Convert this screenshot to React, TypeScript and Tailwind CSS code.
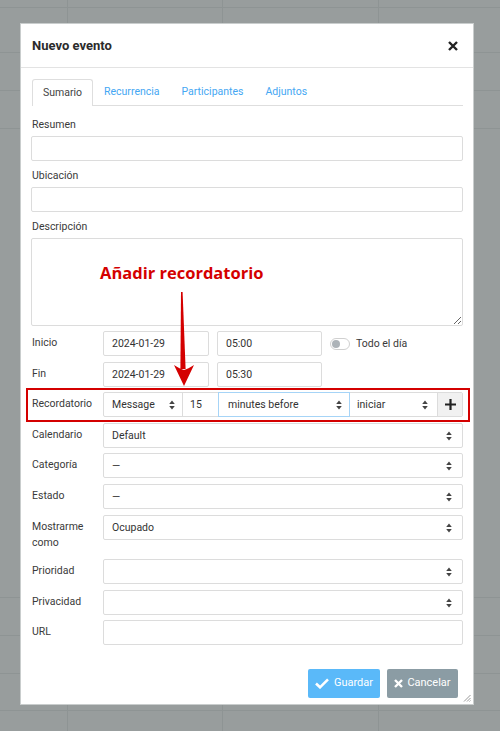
import React from 'react';

const font = { fontFamily: 'Roboto, "Liberation Sans", sans-serif' };

function Arrows() {
  return (
    <svg width="6" height="10" viewBox="0 0 6 10" className="shrink-0">
      <path d="M3 0.5 L5.8 4 H0.2Z M3 9.5 L0.2 6 H5.8Z" fill="#444" />
    </svg>
  );
}

function Field({ value = '', className = '' }: { value?: string; className?: string }) {
  return (
    <div className={`h-[25px] border border-[#dcdcdc] rounded-[2px] bg-white px-[8px] flex items-center text-[10.5px] text-[#333] ${className}`}>
      {value}
    </div>
  );
}

function Select({ value = '', className = '' }: { value?: string; className?: string }) {
  return (
    <div className={`h-[25px] border border-[#dcdcdc] rounded-[2px] bg-white pl-[8px] pr-[10px] flex items-center justify-between text-[10.5px] text-[#333] ${className}`}>
      <span>{value}</span>
      <Arrows />
    </div>
  );
}

function Row({ label, children, className = '' }: { label: string; children: React.ReactNode; className?: string }) {
  return (
    <div className={`flex ${className}`}>
      <div className="w-[72px] shrink-0 pt-[4px] leading-[16px] text-[10.5px] text-[#3a3a3a] pl-[1px]">{label}</div>
      <div className="flex-1 flex gap-[8px] items-start">{children}</div>
    </div>
  );
}

export default function App() {
  const hLines = [7, 52, 90, 128, 597, 635, 673, 710];
  const vLines = [67, 222, 378];
  return (
    <div className="relative w-[500px] h-[731px] bg-[#989d9d] overflow-hidden pt-[23px] pl-[20px]" style={font}>
      <svg className="absolute inset-0" width="500" height="731">
        {hLines.map(y => (
          <line key={y} x1="0" x2="500" y1={y + 0.5} y2={y + 0.5} stroke="#8e9494" strokeWidth="1" />
        ))}
        {vLines.map(x => (
          <line key={x} x1={x + 0.5} x2={x + 0.5} y1="0" y2="731" stroke="#8e9494" strokeWidth="1" />
        ))}
      </svg>

      <div className="relative w-[454px] h-[682px] bg-white border border-[#c9cdcd]">
        {/* header */}
        <div className="h-[44px] border-b border-[#e3e3e3] px-[11px] flex items-center justify-between">
          <span className="text-[13px] font-bold text-[#2b2b2b]">Nuevo evento</span>
          <svg width="10" height="10" viewBox="0 0 10 10" className="mr-[4px]">
            <path d="M1 1 L9 9 M9 1 L1 9" stroke="#222" strokeWidth="2.4" />
          </svg>
        </div>

        <div className="px-[10px]">
          {/* tabs */}
          <div className="mt-[11px] h-[27px] flex border-b border-[#dedede] ml-[1px] text-[10.5px]">
            <div className="px-[10px] h-[27px] flex items-center border border-b-0 border-[#dedede] rounded-t-[3px] bg-white text-[#444]">Sumario</div>
            <div className="px-[11px] flex items-center text-[#45a7f3]">Recurrencia</div>
            <div className="px-[11px] flex items-center text-[#45a7f3]">Participantes</div>
            <div className="px-[11px] flex items-center text-[#45a7f3]">Adjuntos</div>
          </div>

          <div className="mt-[11px] leading-[15px] text-[10.5px] text-[#3a3a3a] pl-[1px]">Resumen</div>
          <Field className="mt-[4px]" />
          <div className="mt-[7px] leading-[15px] text-[10.5px] text-[#3a3a3a] pl-[1px]">Ubicación</div>
          <Field className="mt-[4px]" />
          <div className="mt-[7px] leading-[15px] text-[10.5px] text-[#3a3a3a] pl-[1px]">Descripción</div>
          <textarea className="mt-[4px] block w-full h-[88px] border border-[#dcdcdc] rounded-[2px] outline-none" />

          <Row label="Inicio" className="mt-[5px]">
            <Field value="2024-01-29" className="w-[106px]" />
            <Field value="05:00" className="w-[105px]" />
            <div className="flex items-center h-[25px] gap-[6px]">
              <div className="w-[20px] h-[12px] rounded-full border border-[#d0d0d0] bg-white flex items-center px-[1px]">
                <div className="w-[8px] h-[8px] rounded-full bg-[#adb3b8]" />
              </div>
              <span className="text-[10.5px] text-[#3a3a3a]">Todo el día</span>
            </div>
          </Row>
          <Row label="Fin" className="mt-[6px]">
            <Field value="2024-01-29" className="w-[106px]" />
            <Field value="05:30" className="w-[105px]" />
          </Row>

          <div className="relative mt-[5px]">
            <Row label="Recordatorio">
              <div className="flex-1 flex h-[25px] border border-[#dcdcdc] rounded-[2px] text-[10.5px] text-[#333]">
                <div className="w-[79px] flex items-center justify-between pl-[8px] pr-[7px] border-r border-[#dcdcdc]">
                  <span>Message</span>
                  <Arrows />
                </div>
                <div className="w-[35px] flex items-center pl-[7px]">15</div>
                <div className="w-[132px] -my-[1px] flex items-center justify-between pl-[9px] pr-[7px] border border-[#a6d4f7]">
                  <span>minutes before</span>
                  <Arrows />
                </div>
                <div className="w-[87px] flex items-center justify-between pl-[7px] pr-[9px]">
                  <span>iniciar</span>
                  <Arrows />
                </div>
                <div className="flex-1 flex items-center justify-center bg-[#f1f1f1] border-l border-[#dcdcdc]">
                  <svg width="11" height="11" viewBox="0 0 11 11">
                    <path d="M5.5 0 V11 M0 5.5 H11" stroke="#222" strokeWidth="2.2" />
                  </svg>
                </div>
              </div>
            </Row>
            <div className="absolute -left-[5px] -top-[4px] -right-[7px] -bottom-[5px] border-2 border-[#d40000]" />
          </div>

          <Row label="Calendario" className="mt-[6px]">
            <Select value="Default" className="flex-1" />
          </Row>
          <Row label="Categoría" className="mt-[5px]">
            <Select value="—" className="flex-1" />
          </Row>
          <Row label="Estado" className="mt-[6px]">
            <Select value="—" className="flex-1" />
          </Row>
          <Row label="Mostrarme como" className="mt-[6px]">
            <Select value="Ocupado" className="flex-1" />
          </Row>
          <Row label="Prioridad" className="mt-[8px]">
            <Select className="flex-1" />
          </Row>
          <Row label="Privacidad" className="mt-[6px]">
            <Select className="flex-1" />
          </Row>
          <Row label="URL" className="mt-[5px]">
            <Field className="flex-1" />
          </Row>

          <div className="mt-[24px] mr-[5px] flex justify-end gap-[7px] text-[11px] text-white">
            <div className="w-[72px] h-[29px] rounded-[2px] bg-[#5ab9f9] flex items-center justify-center gap-[5px]">
              <svg width="14" height="11" viewBox="0 0 14 11">
                <path d="M1 5.5 L5 9.3 L13 1.3" stroke="#fff" strokeWidth="2.6" fill="none" />
              </svg>
              <span>Guardar</span>
            </div>
            <div className="w-[71px] h-[29px] rounded-[2px] bg-[#8b9ca4] flex items-center justify-center gap-[4px]">
              <svg width="9" height="9" viewBox="0 0 9 9">
                <path d="M1 1 L8 8 M8 1 L1 8" stroke="#fff" strokeWidth="2.4" />
              </svg>
              <span>Cancelar</span>
            </div>
          </div>
        </div>

        {/* resize grip */}
        <svg className="absolute right-[2px] bottom-[2px]" width="8" height="8" viewBox="0 0 8 8">
          <path d="M7.5 1 L1 7.5 M7.5 4 L4 7.5 M7.5 6.5 L6.5 7.5" stroke="#999" strokeWidth="1" />
        </svg>

        {/* annotation */}
        <div
          className="absolute left-[79px] top-[239px] leading-[20px] text-[16.5px] font-bold text-[#d40000] [text-shadow:1px_1px_1px_#fff,-1px_-1px_1px_#fff]"
          style={{ fontFamily: '"Open Sans", "Noto Sans", sans-serif' }}
        >
          Añadir recordatorio
        </div>
        <svg className="absolute left-[149px] top-[264px]" width="30" height="102" viewBox="170 288 30 102">
          <path d="M181 292 L182.6 292 L185.6 369 L180.4 369 Z" fill="#d40000" />
          <path d="M174 365 Q180 369 184 370 Q188 369 194 365 L184 386 Z" fill="#d40000" />
        </svg>
      </div>
    </div>
  );
}
